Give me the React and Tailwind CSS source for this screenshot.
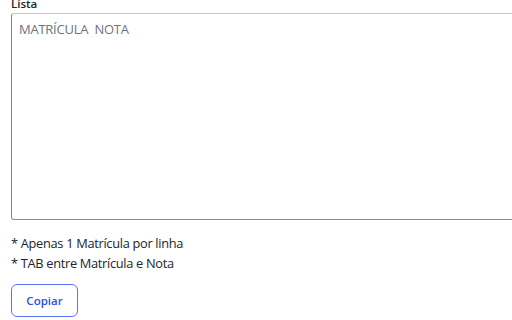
export default function App() {
  return (
    <div className="w-[512px] h-[320px] overflow-hidden bg-white" style={{ fontFamily: '"Open Sans", "Noto Sans", sans-serif' }}>
      <div className="pl-[11px] -mt-[5px]">
        <div className="text-[11.5px] font-semibold leading-[18px] text-[#212529]">Lista</div>
        <div className="w-[520px] h-[207px] border border-[#8a8a8a] border-t-[#c6c6ca] rounded-[3px] px-[7px] py-[6px]">
          <div className="text-[13px] text-[#6c757d] tracking-[-0.25px] whitespace-pre">MATRÍCULA  NOTA</div>
        </div>
        <div className="mt-[13px] text-[12.8px] leading-[20px] text-[#212529] tracking-[-0.3px]">
          <div>* Apenas 1 Matrícula por linha</div>
          <div>* TAB entre Matrícula e Nota</div>
        </div>
        <button className="mt-[11px] w-[67px] h-[33px] border border-[#5b74f0] rounded-[6px] text-[11.5px] font-semibold text-[#2f4fd8] bg-white">
          Copiar
        </button>
      </div>
    </div>
  );
}
